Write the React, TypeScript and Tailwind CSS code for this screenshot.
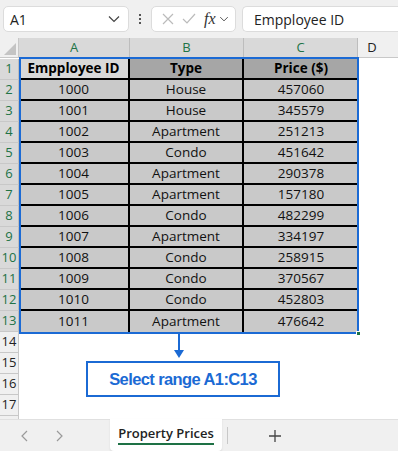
import React from "react";

const rows: [string, string, string][] = [
  ["1000", "House", "457060"],
  ["1001", "House", "345579"],
  ["1002", "Apartment", "251213"],
  ["1003", "Condo", "451642"],
  ["1004", "Apartment", "290378"],
  ["1005", "Apartment", "157180"],
  ["1006", "Condo", "482299"],
  ["1007", "Apartment", "334197"],
  ["1008", "Condo", "258915"],
  ["1009", "Condo", "370567"],
  ["1010", "Condo", "452803"],
  ["1011", "Apartment", "476642"],
];

const font = { fontFamily: '"Open Sans", "Liberation Sans", sans-serif' };

function Chevron({ className = "" }: { className?: string }) {
  return (
    <svg width="12" height="8" viewBox="0 0 12 8" className={className}>
      <path d="M1 1.5 L6 6.5 L11 1.5" fill="none" stroke="#444" strokeWidth="1.2" />
    </svg>
  );
}

export default function App() {
  return (
    <div className="w-[398px] h-[451px] overflow-hidden bg-white flex flex-col" style={font}>
      {/* Formula bar */}
      <div className="h-[38px] bg-[#f0f0f0] flex items-center pl-[3px] gap-[4px] shrink-0">
        <div className="w-[126px] h-[26px] bg-white border border-[#dcdcdc] rounded-[5px] flex items-center justify-between pl-[6px] pr-[8px]">
          <span className="text-[14px] text-[#222]">A1</span>
          <Chevron />
        </div>
        <div className="w-[14px] flex flex-col items-center gap-[2px]">
          <div className="w-[2px] h-[2px] bg-[#555]" />
          <div className="w-[2px] h-[2px] bg-[#555]" />
          <div className="w-[2px] h-[2px] bg-[#555]" />
        </div>
        <div className="w-[85px] h-[26px] bg-white border border-[#dcdcdc] rounded-[5px] flex items-center pl-[10px] gap-[8px]">
          <svg width="12" height="12" viewBox="0 0 12 12">
            <path d="M1 1 L11 11 M11 1 L1 11" stroke="#bbb" strokeWidth="1.2" />
          </svg>
          <svg width="14" height="12" viewBox="0 0 14 12">
            <path d="M1 6 L5 10 L13 1" stroke="#bbb" strokeWidth="1.2" fill="none" />
          </svg>
          <span className="flex items-center gap-[2px]">
            <span className="italic text-[16px] text-[#333] leading-none" style={{ fontFamily: '"Liberation Serif", serif' }}>
              fx
            </span>
            <Chevron className="scale-75" />
          </span>
        </div>
        <div className="flex-1 h-[26px] bg-white border border-[#dcdcdc] rounded-l-[5px] border-r-0 flex items-center pl-[11px] ml-[2px]">
          <span className="text-[14px] text-[#222]">Empployee ID</span>
        </div>
      </div>

      {/* Grid */}
      <div className="relative flex-1 overflow-hidden">
        {/* column header */}
        <div className="flex h-[20px] text-[13px]">
          <div className="w-[19px] bg-[#f0f0f0] border-r border-b border-[#c8c8c8] relative">
            <svg width="14" height="14" viewBox="0 0 14 14" className="absolute right-[1px] bottom-[1px]">
              <path d="M13 1 L13 13 L1 13 Z" fill="#c4c4c4" />
            </svg>
          </div>
          <div className="w-[111px] bg-[#d9d9d9] border-r border-[#bdbdbd] flex items-center justify-center text-[#217346]">A</div>
          <div className="w-[114px] bg-[#d9d9d9] border-r border-[#bdbdbd] flex items-center justify-center text-[#217346]">B</div>
          <div className="w-[114px] bg-[#d9d9d9] border-r border-[#bdbdbd] flex items-center justify-center text-[#217346]">C</div>
          <div className="flex-1 bg-[#f0f0f0] border-b border-[#c8c8c8] flex items-center justify-center text-[#222] pr-[12px]">D</div>
        </div>

        {/* row 1 */}
        <div className="flex h-[22px] pt-[1px]">
          <div className="w-[19px] bg-[#d9d9d9] border-r border-[#bdbdbd] border-b border-b-[#c8c8c8] flex items-center justify-center text-[13px] text-[#217346]">1</div>
          <div className="w-[339px] flex border-b-2 border-black text-[13.5px] font-bold text-black">
            <div className="w-[111px] bg-[#d9d9d9] border-r-2 border-black flex items-center justify-center">Empployee ID</div>
            <div className="w-[114px] bg-[#a6a6a6] border-r-2 border-black flex items-center justify-center">Type</div>
            <div className="flex-1 bg-[#a6a6a6] flex items-center justify-center">Price ($)</div>
          </div>
        </div>

        {rows.map((r, i) => (
          <div key={i} className="flex h-[21px]">
            <div className="w-[19px] bg-[#d9d9d9] border-r border-[#bdbdbd] border-b border-b-[#c8c8c8] flex items-center justify-center text-[13px] text-[#217346]">
              {i + 2}
            </div>
            <div className={`w-[339px] flex text-[13.5px] text-[#111] bg-[#c9c9c9] ${i < rows.length - 1 ? "border-b-2 border-black" : ""}`}>
              <div className="w-[111px] border-r-2 border-black flex items-center justify-center">{r[0]}</div>
              <div className="w-[114px] border-r-2 border-black flex items-center justify-center">{r[1]}</div>
              <div className="flex-1 flex items-center justify-center">{r[2]}</div>
            </div>
          </div>
        ))}

        {[14, 15, 16, 17, 18].map((n) => (
          <div key={n} className="flex h-[21px]">
            <div className="w-[19px] bg-[#f0f0f0] border-r border-b border-[#c8c8c8] flex items-center justify-center text-[13px] text-[#222]">
              {n}
            </div>
          </div>
        ))}

        {/* selection border */}
        <div className="absolute left-[19px] top-[19px] w-[340px] h-[277px] border-2 border-[#1b6ad4] pointer-events-none" />
        <div className="absolute left-[356px] top-[293px] w-[5px] h-[5px] bg-[#1e7145] border border-white" />

        {/* arrow */}
        <div className="absolute left-[178px] top-[296px] w-[2px] h-[18px] bg-[#1b6ad4]" />
        <svg width="10" height="8" viewBox="0 0 10 8" className="absolute left-[174px] top-[312px]">
          <path d="M0 0 L10 0 L5 8 Z" fill="#1b6ad4" />
        </svg>

        {/* callout */}
        <div className="absolute left-[86px] top-[323px] w-[194px] h-[36px] border-2 border-[#1b6ad4] bg-white flex items-center justify-center">
          <span
            className="text-[16.5px] font-bold text-[#1b6ad4] tracking-[-0.6px]"
            style={{ fontFamily: '"Liberation Sans", Arial, sans-serif' }}
          >
            Select range A1:C13
          </span>
        </div>
      </div>

      {/* Sheet tabs */}
      <div className="h-[32px] bg-[#f0f0f0] flex items-stretch shrink-0 border-t border-[#e0e0e0]">
        <div className="w-[110px] flex items-center pl-[20px] gap-[24px]">
          <svg width="10" height="12" viewBox="0 0 10 12">
            <path d="M7 1 L2 6 L7 11" fill="none" stroke="#9a9a9a" strokeWidth="1.2" />
          </svg>
          <svg width="10" height="12" viewBox="0 0 10 12">
            <path d="M3 1 L8 6 L3 11" fill="none" stroke="#9a9a9a" strokeWidth="1.2" />
          </svg>
        </div>
        <div className="w-[112px] bg-white rounded-b-[4px] flex flex-col items-center justify-center -mt-px shadow-[0_1px_2px_rgba(0,0,0,0.1)]">
          <span className="text-[13px] font-semibold text-[#222] leading-[16px]">Property Prices</span>
          <div className="w-[96px] h-[2px] bg-[#1e7145] mt-[2px]" />
        </div>
        <div className="w-px bg-[#c8c8c8] my-[7px] ml-[5px]" />
        <div className="flex-1 flex items-center pl-[40px]">
          <svg width="14" height="14" viewBox="0 0 14 14">
            <path d="M7 1 L7 13 M1 7 L13 7" stroke="#444" strokeWidth="1.3" />
          </svg>
        </div>
      </div>
    </div>
  );
}
